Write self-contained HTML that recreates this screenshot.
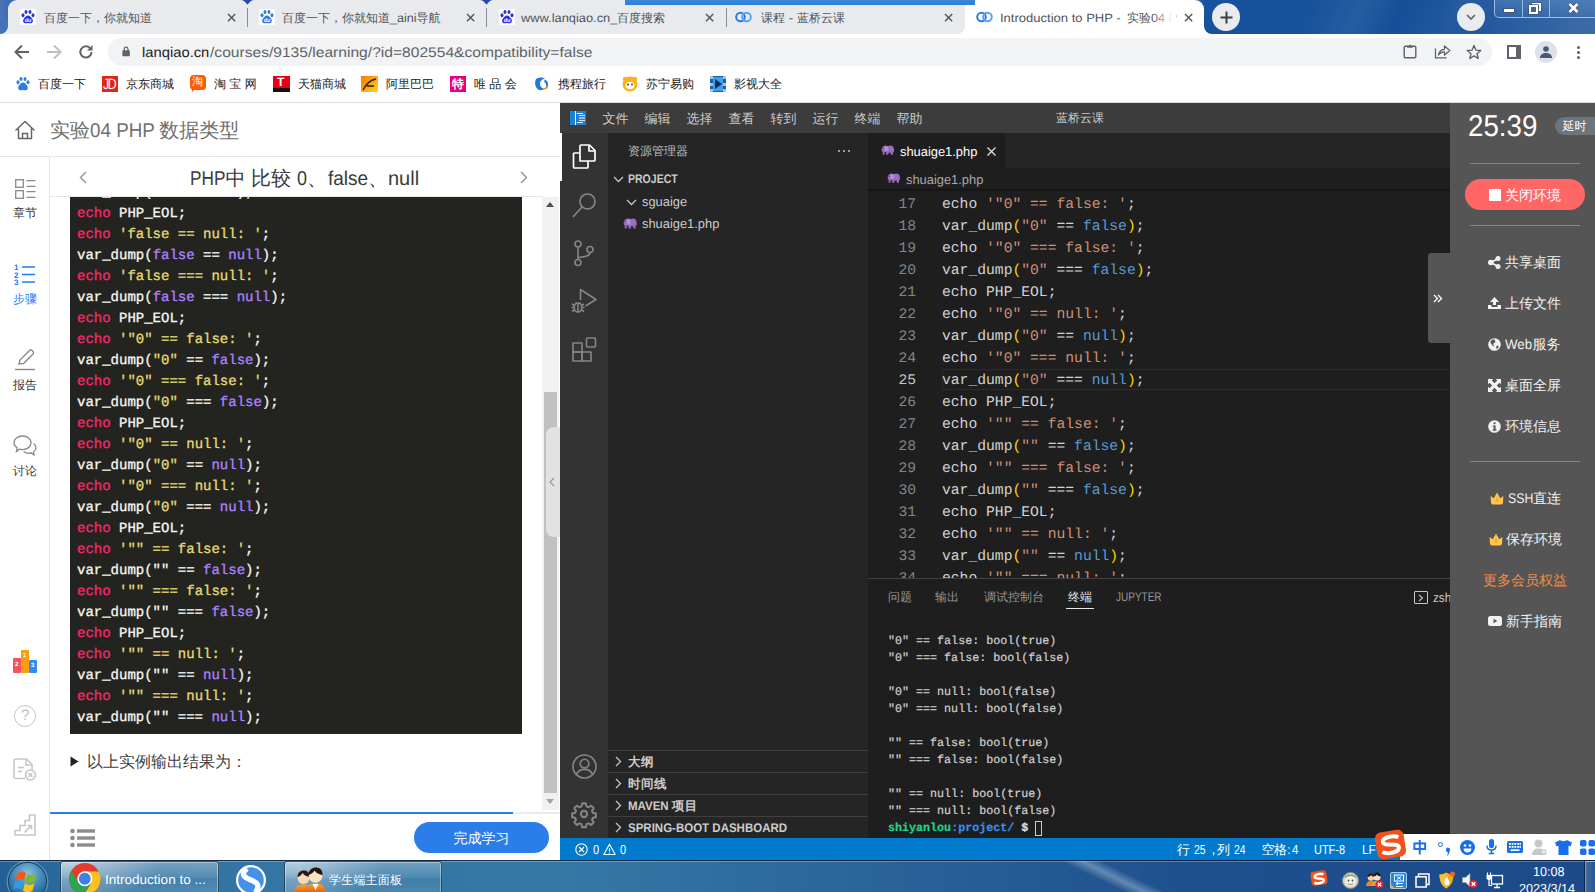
<!DOCTYPE html><html><head><meta charset="utf-8"><title>Introduction to PHP</title><style>
*{box-sizing:border-box;margin:0;padding:0}
html,body{width:1595px;height:892px;overflow:hidden;background:#fff}
body{position:relative;text-rendering:geometricPrecision;font-family:"Liberation Sans",sans-serif;font-size:12px;color:#333}
.a{position:absolute;white-space:nowrap}
.t{position:absolute;white-space:nowrap;line-height:1}
.mono{font-family:"Liberation Mono",monospace}
svg{position:absolute;overflow:visible}
/* left code */
.lc{position:absolute;left:77px;white-space:pre;font-family:"Liberation Mono",monospace;font-size:14px;line-height:21px;height:21px;color:#f8f8f2;-webkit-text-stroke:.3px}
.k{color:#f92672}.s{color:#e6db74}.c{color:#ae81ff}
/* vscode code */
.vc{position:absolute;left:942px;white-space:pre;font-family:"Liberation Mono",monospace;font-size:14.68px;line-height:22px;height:22px;color:#d4d4d4}
.ln{position:absolute;left:880px;width:36px;text-align:right;font-family:"Liberation Mono",monospace;font-size:14.68px;line-height:22px;height:22px;color:#858585}
.vs{color:#ce9178}.vb{color:#569cd6}.vp{color:#ffd700}
.tm{position:absolute;left:888px;white-space:pre;font-family:"Liberation Mono",monospace;font-size:11.7px;line-height:17px;height:17px;color:#d2d2d2;-webkit-text-stroke:.2px}
</style></head><body>
<div class="a" id="tabstrip" style="left:0;top:0;width:1595px;height:34px;background:linear-gradient(90deg,#4a76b8 0px,#3f6db3 8px,#2a62ac 1200px,#17529c 1204px,#164f98 1440px,#2a5fa2 1520px,#3d6ba8 1595px)"></div>
<div class="a" style="left:8px;top:0;width:966px;height:34px;background:#e8eaed;border-radius:9px 0 0 0"></div>
<div class="a" style="left:0px;top:26px;width:8px;height:8px;background:#e8eaed"></div>
<div class="a" style="left:-8px;top:18px;width:16px;height:16px;background:#4572b6;border-radius:0 0 8px 0"></div>
<div class="a" style="left:965px;top:0;width:239px;height:34px;background:#fff;border-radius:9px 9px 0 0"></div>
<div class="a" style="left:957px;top:26px;width:8px;height:8px;background:#fff"></div>
<div class="a" style="left:949px;top:18px;width:16px;height:16px;background:#e8eaed;border-radius:0 0 8px 0"></div>
<div class="a" style="left:1204px;top:26px;width:8px;height:8px;background:#fff"></div>
<div class="a" style="left:1204px;top:18px;width:16px;height:16px;background:#17529c;border-radius:0 0 0 8px"></div>
<div class="a" style="left:0;top:34px;width:1595px;height:69px;background:#fff"></div>
<div class="a" style="left:625px;top:0;width:350px;height:4.600px;background:linear-gradient(180deg,#3a86dc,#2f7fd6)"></div><div class="a" style="left:1240px;top:0;width:260px;height:34px;background:linear-gradient(115deg,rgba(255,255,255,0) 25%,rgba(255,255,255,.07) 45%,rgba(255,255,255,0) 60%,rgba(255,255,255,.05) 80%,rgba(255,255,255,0) 95%)"></div><div class="a" style="left:247px;top:8px;width:1px;height:19px;background:#8a8d92"></div><div class="a" style="left:486px;top:8px;width:1px;height:19px;background:#8a8d92"></div><div class="a" style="left:725.5px;top:8px;width:1px;height:19px;background:#8a8d92"></div><svg style="left:241px;top:0" width="13" height="5"><path d="M0 0C4 0 5.500 4.500 6.500 4.500S9 0 13 0z" fill="#1e4fa0"/></svg><svg style="left:480px;top:0" width="13" height="5"><path d="M0 0C4 0 5.500 4.500 6.500 4.500S9 0 13 0z" fill="#1e4fa0"/></svg><div class="t" style="left:44.00px;top:11.5px;font-size:12px;color:#50545a;">百度一下，你就知道</div><div class="t" style="left:282.00px;top:11.5px;font-size:12px;color:#50545a;">百度一下，你就知道</div><div class="t" style="left:390.00px;top:11.5px;font-size:12px;color:#50545a;white-space:pre;transform:scaleX(1.0500);transform-origin:0 50%;">_aini</div><div class="t" style="left:416.50px;top:11.5px;font-size:12px;color:#50545a;">导航</div><div class="t" style="left:521.00px;top:11.5px;font-size:12px;color:#50545a;white-space:pre;transform:scaleX(1.0700);transform-origin:0 50%;">www.lanqiao.cn_</div><div class="t" style="left:617.00px;top:11.5px;font-size:12px;color:#50545a;">百度搜索</div><div class="t" style="left:761.00px;top:11.5px;font-size:12px;color:#50545a;">课程</div><div class="t" style="left:785.00px;top:11.5px;font-size:12px;color:#50545a;white-space:pre;transform:scaleX(1.1000);transform-origin:0 50%;"> - </div><div class="t" style="left:797.00px;top:11.5px;font-size:12px;color:#50545a;">蓝桥云课</div><div class="t" style="left:1000.00px;top:11.5px;font-size:12px;color:#50545a;white-space:pre;transform:scaleX(1.0850);transform-origin:0 50%;">Introduction to PHP - </div><div class="t" style="left:1127.00px;top:11.5px;font-size:12px;color:#50545a;">实验</div><div class="t" style="left:1151.00px;top:11.5px;font-size:12px;color:#50545a;white-space:pre;transform:scaleX(1.0500);transform-origin:0 50%;">04 P</div><div class="a" style="left:1152px;top:6px;width:24px;height:22px;background:linear-gradient(90deg,rgba(255,255,255,0),#fff 85%)"></div><svg style="left:228.4px;top:13.9px" width="7.2" height="7.2"><path d="M0 0L7.2 7.2M7.2 0L0 7.2" stroke="#55595e" stroke-width="1.5" fill="none"/></svg><svg style="left:466.9px;top:13.9px" width="7.2" height="7.2"><path d="M0 0L7.2 7.2M7.2 0L0 7.2" stroke="#55595e" stroke-width="1.5" fill="none"/></svg><svg style="left:705.9px;top:13.9px" width="7.2" height="7.2"><path d="M0 0L7.2 7.2M7.2 0L0 7.2" stroke="#55595e" stroke-width="1.5" fill="none"/></svg><svg style="left:945.4px;top:13.9px" width="7.2" height="7.2"><path d="M0 0L7.2 7.2M7.2 0L0 7.2" stroke="#55595e" stroke-width="1.5" fill="none"/></svg><svg style="left:1184.9px;top:13.9px" width="7.2" height="7.2"><path d="M0 0L7.2 7.2M7.2 0L0 7.2" stroke="#55595e" stroke-width="1.5" fill="none"/></svg><svg style="left:20px;top:9px" width="16" height="16" viewBox="0 0 16 16"><rect width="16" height="16" rx="1.500" fill="#fff"/><g fill="#2932e1"><ellipse cx="3" cy="6.2" rx="1.5" ry="2"/><ellipse cx="6" cy="3" rx="1.5" ry="2.1"/><ellipse cx="10" cy="3" rx="1.5" ry="2.1"/><ellipse cx="13" cy="6.2" rx="1.5" ry="2"/><path d="M8 6.5c2 0 3.2 2 4.3 3.4 1.2 1.5.6 4-1.3 4.3-1.2.2-2-.3-3-.3s-1.8.5-3 .3c-1.9-.3-2.5-2.800-1.300-4.300C4.800 8.500 6 6.500 8 6.500z"/></g><text x="8" y="13" font-family="Liberation Sans" font-size="5.500" font-weight="bold" fill="#fff" text-anchor="middle">du</text></svg><svg style="left:259px;top:9px" width="16" height="16" viewBox="0 0 16 16"><rect width="16" height="16" rx="1.500" fill="#fff"/><g fill="#2f7de1"><ellipse cx="3" cy="6.2" rx="1.5" ry="2"/><ellipse cx="6" cy="3" rx="1.5" ry="2.1"/><ellipse cx="10" cy="3" rx="1.5" ry="2.1"/><ellipse cx="13" cy="6.2" rx="1.5" ry="2"/><path d="M8 6.5c2 0 3.2 2 4.3 3.4 1.2 1.5.6 4-1.3 4.3-1.2.2-2-.3-3-.3s-1.8.5-3 .3c-1.9-.3-2.5-2.800-1.300-4.300C4.800 8.500 6 6.500 8 6.500z"/></g><text x="8" y="13" font-family="Liberation Sans" font-size="5.500" font-weight="bold" fill="#fff" text-anchor="middle">du</text></svg><svg style="left:499px;top:9px" width="16" height="16" viewBox="0 0 16 16"><rect width="16" height="16" rx="1.500" fill="#fff"/><g fill="#2932e1"><ellipse cx="3" cy="6.2" rx="1.5" ry="2"/><ellipse cx="6" cy="3" rx="1.5" ry="2.1"/><ellipse cx="10" cy="3" rx="1.5" ry="2.1"/><ellipse cx="13" cy="6.2" rx="1.5" ry="2"/><path d="M8 6.5c2 0 3.2 2 4.3 3.4 1.2 1.5.6 4-1.3 4.3-1.2.2-2-.3-3-.3s-1.8.5-3 .3c-1.9-.3-2.5-2.800-1.300-4.300C4.800 8.500 6 6.500 8 6.500z"/></g><text x="8" y="13" font-family="Liberation Sans" font-size="5.500" font-weight="bold" fill="#fff" text-anchor="middle">du</text></svg><svg style="left:735px;top:11px" width="17" height="12" viewBox="0 0 17 12"><circle cx="5.5" cy="6" r="4.3" fill="none" stroke="#2a7be4" stroke-width="2"/><circle cx="11.500" cy="6" r="4.3" fill="none" stroke="#5aa0f0" stroke-width="2"/></svg><svg style="left:976px;top:11px" width="17" height="12" viewBox="0 0 17 12"><circle cx="5.5" cy="6" r="4.3" fill="none" stroke="#2a7be4" stroke-width="2"/><circle cx="11.500" cy="6" r="4.3" fill="none" stroke="#5aa0f0" stroke-width="2"/></svg><div class="a" style="left:1212px;top:3px;width:28px;height:28px;border-radius:50%;background:#e9ebee"></div><svg style="left:1220px;top:11px" width="13" height="13"><path d="M6.5 0.5V12.5M0.5 6.5H12.5" stroke="#3c4043" stroke-width="2" fill="none"/></svg><div class="a" style="left:1457px;top:3px;width:28px;height:28px;border-radius:50%;background:#e9ebee"></div><svg style="left:1466px;top:14px" width="10" height="7"><path d="M1 1L5 5L9 1" stroke="#5f6368" stroke-width="1.700" fill="none"/></svg><div class="a" style="left:1494px;top:-2px;width:104px;height:20px;border:1px solid rgba(190,215,245,.75);border-radius:0 0 0 5px;background:linear-gradient(180deg,rgba(120,165,215,.35),rgba(80,125,185,.25))"></div>
<div class="a" style="left:1522px;top:0;width:1px;height:17px;background:rgba(190,215,245,.7)"></div>
<div class="a" style="left:1549px;top:0;width:1px;height:17px;background:rgba(190,215,245,.7)"></div>
<div class="a" style="left:1503px;top:8px;width:12px;height:5px;background:#fff;border:1px solid #46566e"></div>
<div class="a" style="left:1532px;top:2.500px;width:9px;height:8px;border:2px solid #fff;box-shadow:0 0 0 .7px #46566e"></div>
<div class="a" style="left:1529px;top:5px;width:9px;height:8.500px;border:2.500px solid #fff;background:#3a67a3;box-shadow:0 0 0 .7px #46566e"></div>
<svg style="left:1568px;top:3px" width="11" height="10"><path d="M1.500 1L9.500 9M9.500 1L1.500 9" stroke="#46566e" stroke-width="4" fill="none"/><path d="M1.500 1L9.500 9M9.500 1L1.500 9" stroke="#fff" stroke-width="2.600" fill="none"/></svg>

<svg style="left:14px;top:44px" width="16" height="16"><path d="M15 8H2M8 1.500L1.500 8L8 14.500" stroke="#5f6368" stroke-width="2" fill="none"/></svg>
<svg style="left:46px;top:44px" width="16" height="16"><path d="M1 8H14M8 1.500L14.500 8L8 14.500" stroke="#bdc1c6" stroke-width="2" fill="none"/></svg>
<svg style="left:78px;top:44px" width="16" height="16" viewBox="0 0 16 16"><path d="M13.500 8A5.600 5.600 0 1 1 11.800 3.900" stroke="#5f6368" stroke-width="2" fill="none"/><path d="M14.500 1V6.500H9z" fill="#5f6368"/></svg>
<div class="a" style="left:108px;top:38px;width:1384px;height:28px;border-radius:14px;background:#f1f3f4"></div>
<svg style="left:122px;top:46px" width="8.200" height="10.800" viewBox="0 0 11 14"><rect x="0.500" y="5.500" width="10" height="8" rx="1" fill="#5f6368"/><path d="M3 6V3.800a2.500 2.500 0 0 1 5 0V6" stroke="#5f6368" stroke-width="1.600" fill="none"/></svg>

<div class="t" style="left:142.00px;top:45px;font-size:14px;color:#202124;white-space:pre;transform:scaleX(1.0550);transform-origin:0 50%;">lanqiao.cn</div><div class="t" style="left:209.50px;top:45px;font-size:14px;color:#5f6368;white-space:pre;transform:scaleX(1.1140);transform-origin:0 50%;">/courses/9135/learning/?id=802554&amp;compatibility=false</div>
<svg style="left:1403px;top:44px" width="14" height="15" viewBox="0 0 14 15"><rect x="1.200" y="2.200" width="11.600" height="11.600" rx="1.200" fill="none" stroke="#5f6368" stroke-width="1.400"/><path d="M4.200 3.800V1.800H5.800L7 0.600L8.200 1.800H9.800V3.800z" fill="#5f6368"/></svg>
<svg style="left:1434px;top:44px" width="17" height="15" viewBox="0 0 17 15"><path d="M1.500 4.500V13.800H12.500" stroke="#5f6368" stroke-width="1.300" fill="none"/><path d="M4.500 11C5 7.500 7.500 5.500 10.500 5.300V2L15.800 6.500L10.500 11V7.800C8 7.800 6 8.800 4.500 11z" fill="none" stroke="#5f6368" stroke-width="1.300" stroke-linejoin="round"/></svg>
<svg style="left:1466px;top:43.500px" width="16" height="16" viewBox="0 0 16 16"><path d="M8 1.500L9.900 6.100L14.800 6.500L11 9.700L12.200 14.500L8 11.900L3.800 14.500L5 9.700L1.200 6.500L6.100 6.100z" fill="none" stroke="#5f6368" stroke-width="1.400" stroke-linejoin="round"/></svg>
<div class="a" style="left:1507px;top:45px;width:14px;height:14px;border:2px solid #5f6368"></div><div class="a" style="left:1516px;top:45px;width:5px;height:14px;background:#5f6368"></div>
<div class="a" style="left:1535px;top:41px;width:22px;height:22px;border-radius:50%;background:#dfe1e8"></div>
<svg style="left:1540px;top:46px" width="12" height="12" viewBox="0 0 12 12"><circle cx="6" cy="3" r="2.800" fill="#4a5878"/><path d="M0 12c0-3.500 2.500-5 6-5s6 1.500 6 5z" fill="#4a5878"/></svg>
<div class="a" style="left:1576.500px;top:46px;width:3px;height:3px;border-radius:50%;background:#5f6368;box-shadow:0 5px 0 #5f6368,0 10px 0 #5f6368"></div>
<div class="t" style="left:38px;top:78px;font-size:12px;color:#202124">百度一下</div><div class="t" style="left:126px;top:78px;font-size:12px;color:#202124">京东商城</div><div class="t" style="left:214px;top:78px;font-size:12px;color:#202124">淘 宝 网</div><div class="t" style="left:298px;top:78px;font-size:12px;color:#202124">天猫商城</div><div class="t" style="left:386px;top:78px;font-size:12px;color:#202124">阿里巴巴</div><div class="t" style="left:474px;top:78px;font-size:12px;color:#202124">唯 品 会</div><div class="t" style="left:558px;top:78px;font-size:12px;color:#202124">携程旅行</div><div class="t" style="left:646px;top:78px;font-size:12px;color:#202124">苏宁易购</div><div class="t" style="left:734px;top:78px;font-size:12px;color:#202124">影视大全</div>
<svg style="left:15px;top:76px" width="16" height="16" viewBox="0 0 16 16"><g fill="#2f7de1"><ellipse cx="3" cy="6.200" rx="1.500" ry="2"/><ellipse cx="6" cy="3" rx="1.500" ry="2.100"/><ellipse cx="10" cy="3" rx="1.500" ry="2.100"/><ellipse cx="13" cy="6.200" rx="1.500" ry="2"/><path d="M8 6.500c2 0 3.200 2 4.300 3.400 1.200 1.500.600 4-1.300 4.300-1.200.200-2-.300-3-.300s-1.800.500-3 .300c-1.900-.300-2.500-2.800-1.300-4.300C4.800 8.500 6 6.500 8 6.500z"/></g></svg>
<div class="a" style="left:102px;top:76px;width:16px;height:16px;background:#e1251b"></div><div class="t" style="left:102.500px;top:76.500px;font-size:15px;color:#fff;letter-spacing:-1.800px;transform:scaleX(.82);transform-origin:0 50%">JD</div>
<div class="a" style="left:190px;top:75px;width:16px;height:15px;background:#ff5a00;border-radius:4px"></div><div class="a" style="left:192px;top:88px;width:0;height:0;border-left:4px solid #ff5a00;border-bottom:4px solid transparent"></div><div class="t" style="left:192px;top:77px;font-size:11px;color:#fff">淘</div>
<div class="a" style="left:273px;top:76px;width:17px;height:16px;background:#e60012;border-bottom:4px solid #111"></div><div class="t" style="left:277px;top:76px;font-size:12px;font-weight:bold;color:#fff">T</div>
<div class="a" style="left:361px;top:76px;width:17px;height:16px;background:linear-gradient(135deg,#ff7a00,#ffd21e)"></div><svg style="left:361px;top:76px" width="17" height="16"><path d="M2 14C6 6 10 4 15 3M6 10H13" stroke="#222" stroke-width="1.500" fill="none"/></svg>
<div class="a" style="left:450px;top:76px;width:16px;height:16px;background:#e4007f"></div><div class="t" style="left:452px;top:78px;font-size:12px;font-weight:bold;color:#fff">特</div>
<svg style="left:534px;top:76px" width="16" height="16" viewBox="0 0 16 16"><path d="M2 3C5 1 9 1 11 3 8 3 6 5 6 8c0 2.500 2 4.500 4.500 4.500C8.500 15 4 15 2 11 0.500 8 1 5 2 3z" fill="#2577e3"/><path d="M11 3.500c2 1 3.500 3 3 6-.300 2-1.500 3.500-3.500 4 1.500-1.500 2-3 1.500-5-.300-1.300-1-2.200-2-2.700z" fill="#2577e3"/><path d="M9 12.500c2 .500 4-.500 5-2" stroke="#ff9a1f" stroke-width="1.500" fill="none"/></svg>
<svg style="left:622px;top:76px" width="16" height="16" viewBox="0 0 16 16"><circle cx="8" cy="8" r="7.500" fill="#fbb216"/><circle cx="3" cy="3" r="2.200" fill="#fbb216"/><circle cx="13" cy="3" r="2.200" fill="#fbb216"/><ellipse cx="8" cy="9.500" rx="4.500" ry="3.800" fill="#fff"/><circle cx="6" cy="8.500" r=".9" fill="#333"/><circle cx="10" cy="8.500" r=".9" fill="#333"/></svg>
<div class="a" style="left:710px;top:76px;width:16px;height:16px;background:#1c5fa8;border-left:3px dotted #9cc4ea;border-right:3px dotted #9cc4ea"></div><div class="a" style="left:713px;top:77px;width:10px;height:14px;background:#3ea0e6"></div><div class="a" style="left:715px;top:79px;width:0;height:0;border-left:7px solid #0d2d5c;border-top:5px solid transparent;border-bottom:5px solid transparent"></div>
<div class="a" style="left:0;top:102px;width:1595px;height:1px;background:#dcdcdc"></div>

<div class="a" style="left:0;top:103px;width:560px;height:757px;background:#fff"></div>
<div class="a" style="left:0;top:156px;width:560px;height:1px;background:#e8e8e8"></div>
<div class="a" style="left:49px;top:157px;width:1px;height:703px;background:#e4e4e4"></div>
<div class="a" style="left:50px;top:196px;width:493px;height:1px;background:#e8e8e8"></div>
<svg style="left:14px;top:119px" width="22" height="22" viewBox="0 0 22 22"><path d="M1.500 11.500L11 2.500L20.500 11.500M4.500 9.500V19.500H17.500V9.500" fill="none" stroke="#666" stroke-width="1.500" stroke-linejoin="round"/><path d="M8.500 19V14.500H13.500V19" fill="none" stroke="#666" stroke-width="1.500"/></svg>
<svg style="left:79px;top:171px" width="8" height="13"><path d="M7 1L1.500 6.500L7 12" stroke="#999" stroke-width="1.500" fill="none"/></svg>
<svg style="left:520px;top:171px" width="8" height="13"><path d="M1 1L6.500 6.500L1 12" stroke="#999" stroke-width="1.500" fill="none"/></svg>
<div class="t" style="left:50.00px;top:121px;font-size:20px;color:#707070;">实验</div><div class="t" style="left:89.70px;top:121px;font-size:20px;color:#707070;white-space:pre;transform:scaleX(0.9400);transform-origin:0 50%;">04 PHP </div><div class="t" style="left:159.30px;top:121px;font-size:20px;color:#707070;">数据类型</div><div class="t" style="left:190.00px;top:169px;font-size:20px;color:#3a3a3a;white-space:pre;transform:scaleX(0.8600);transform-origin:0 50%;">PHP</div><div class="t" style="left:225.50px;top:169px;font-size:20px;color:#3a3a3a;">中</div><div class="t" style="left:251.00px;top:169px;font-size:20px;color:#3a3a3a;">比较</div><div class="t" style="left:296.50px;top:169px;font-size:20px;color:#3a3a3a;white-space:pre;transform:scaleX(0.9000);transform-origin:0 50%;">0</div><div class="t" style="left:307.00px;top:169px;font-size:20px;color:#3a3a3a;">、</div><div class="t" style="left:328.00px;top:169px;font-size:20px;color:#3a3a3a;white-space:pre;transform:scaleX(0.9500);transform-origin:0 50%;">false</div><div class="t" style="left:368.00px;top:169px;font-size:20px;color:#3a3a3a;">、</div><div class="t" style="left:388.00px;top:169px;font-size:20px;color:#3a3a3a;white-space:pre;">null</div>
<svg style="left:15px;top:179px" width="21" height="21" viewBox="0 0 21 21"><g fill="none" stroke="#8a8a8a" stroke-width="1.300"><rect x="0.700" y="0.700" width="7.600" height="7.600"/><rect x="0.700" y="11.700" width="7.600" height="7.600"/><path d="M11.500 1.700H20.500M11.500 7.300H20.500M11.500 12.700H20.500M11.500 18.300H20.500"/></g></svg>
<div class="t" style="left:13px;top:207px;font-size:12px;color:#333">章节</div>
<svg style="left:14px;top:263px" width="22" height="23" viewBox="0 0 22 23"><g fill="none" stroke="#1a7dff" stroke-width="1.700"><path d="M8 4H21M8 11.500H21M8 19H21"/></g><g fill="#1677ff" font-family="Liberation Sans" font-size="8" font-weight="bold"><text x="0" y="7">1</text><text x="0" y="14.500">2</text><text x="0" y="22">3</text></g></svg>
<div class="t" style="left:13px;top:293px;font-size:12px;color:#1a7dff">步骤</div>
<svg style="left:15px;top:349px" width="21" height="22" viewBox="0 0 21 22"><g fill="none" stroke="#8a8a8a" stroke-width="1.400"><path d="M4 15L5 11L14.500 1.500a1.800 1.800 0 0 1 2.600 0l.9.900a1.800 1.800 0 0 1 0 2.600L8.500 14.500z"/><path d="M0 20.500H20"/></g></svg>
<div class="t" style="left:13px;top:379px;font-size:12px;color:#333">报告</div>
<svg style="left:13px;top:435px" width="24" height="22" viewBox="0 0 24 22"><g fill="none" stroke="#8a8a8a" stroke-width="1.300"><path d="M9.500 1C14.500 1 18 4 18 7.800s-3.500 6.800-8.500 6.800c-1 0-2-.1-3-.4L3.500 16.500l.7-3.500C2.200 11.800 1 10 1 7.800 1 4 4.500 1 9.500 1z"/><path d="M20.500 8.500c1.500 1 2.500 2.500 2.500 4.200 0 1.800-1 3.300-2.600 4.300l.6 3-2.800-2c-2.700.7-5.500.2-7.500-1.500"/></g></svg>
<div class="t" style="left:13px;top:465px;font-size:12px;color:#333">讨论</div>
<div class="a" style="left:13px;top:658px;width:8px;height:15px;background:#f4525c;border-radius:1px"></div>
<div class="a" style="left:21px;top:650px;width:8px;height:23px;background:#fb9d12;border-radius:1px"></div>
<div class="a" style="left:29px;top:660px;width:8px;height:13px;background:#2f8df5;border-radius:1px"></div>
<div class="t" style="left:15px;top:662px;font-size:6px;font-weight:bold;color:#fff">2</div>
<div class="t" style="left:23px;top:653px;font-size:6px;font-weight:bold;color:#fff">1</div>
<div class="t" style="left:31px;top:663px;font-size:6px;font-weight:bold;color:#fff">3</div>
<div class="a" style="left:14px;top:705px;width:22px;height:22px;border-radius:50%;border:1.700px solid #c6c6c6"></div>
<div class="t" style="left:21px;top:708px;font-size:15px;color:#c0c0c0">?</div>
<svg style="left:13px;top:758px" width="24" height="23" viewBox="0 0 24 23"><g fill="none" stroke="#c6c6c6" stroke-width="1.600"><path d="M12 20.500H3a2 2 0 0 1-2-2V3a2 2 0 0 1 2-2h10.500L19 6.500V12"/><path d="M13 1.500V7H18.500M5 9.500H11M5 13.500H9"/><circle cx="17.500" cy="17" r="5"/><path d="M15.500 15L19.500 19M19.500 15L15.500 19"/></g></svg>
<svg style="left:14px;top:813.500px" width="22" height="22" viewBox="0 0 22 22"><g fill="none" stroke="#c6c6c6" stroke-width="1.600"><path d="M1 21V16.500H6V11.500H11V6.500H15.500V1H21V21z"/><path d="M10.500 18.500L17.500 11.500M13.500 11.500H17.500V15.500"/></g></svg>
<div class="a" style="left:70px;top:197px;width:452px;height:537px;background:#23241f;overflow:hidden"></div><div class="a" style="left:70px;top:197px;width:452px;height:537px;overflow:hidden"><div class="lc" style="left:7px;top:-14.5px">var_dump(0 === <span class="c">null</span>);</div><div class="lc" style="left:7px;top:6.5px"><span class="k">echo</span> PHP_EOL;</div><div class="lc" style="left:7px;top:27.5px"><span class="k">echo</span> <span class="s">'false == null: '</span>;</div><div class="lc" style="left:7px;top:48.5px">var_dump(<span class="c">false</span> == <span class="c">null</span>);</div><div class="lc" style="left:7px;top:69.5px"><span class="k">echo</span> <span class="s">'false === null: '</span>;</div><div class="lc" style="left:7px;top:90.5px">var_dump(<span class="c">false</span> === <span class="c">null</span>);</div><div class="lc" style="left:7px;top:111.5px"><span class="k">echo</span> PHP_EOL;</div><div class="lc" style="left:7px;top:132.5px"><span class="k">echo</span> <span class="s">'"0" == false: '</span>;</div><div class="lc" style="left:7px;top:153.5px">var_dump(<span class="s">"0"</span> == <span class="c">false</span>);</div><div class="lc" style="left:7px;top:174.5px"><span class="k">echo</span> <span class="s">'"0" === false: '</span>;</div><div class="lc" style="left:7px;top:195.5px">var_dump(<span class="s">"0"</span> === <span class="c">false</span>);</div><div class="lc" style="left:7px;top:216.5px"><span class="k">echo</span> PHP_EOL;</div><div class="lc" style="left:7px;top:237.5px"><span class="k">echo</span> <span class="s">'"0" == null: '</span>;</div><div class="lc" style="left:7px;top:258.5px">var_dump(<span class="s">"0"</span> == <span class="c">null</span>);</div><div class="lc" style="left:7px;top:279.5px"><span class="k">echo</span> <span class="s">'"0" === null: '</span>;</div><div class="lc" style="left:7px;top:300.5px">var_dump(<span class="s">"0"</span> === <span class="c">null</span>);</div><div class="lc" style="left:7px;top:321.5px"><span class="k">echo</span> PHP_EOL;</div><div class="lc" style="left:7px;top:342.5px"><span class="k">echo</span> <span class="s">'"" == false: '</span>;</div><div class="lc" style="left:7px;top:363.5px">var_dump("" == <span class="c">false</span>);</div><div class="lc" style="left:7px;top:384.5px"><span class="k">echo</span> <span class="s">'"" === false: '</span>;</div><div class="lc" style="left:7px;top:405.5px">var_dump("" === <span class="c">false</span>);</div><div class="lc" style="left:7px;top:426.5px"><span class="k">echo</span> PHP_EOL;</div><div class="lc" style="left:7px;top:447.5px"><span class="k">echo</span> <span class="s">'"" == null: '</span>;</div><div class="lc" style="left:7px;top:468.5px">var_dump("" == <span class="c">null</span>);</div><div class="lc" style="left:7px;top:489.5px"><span class="k">echo</span> <span class="s">'"" === null: '</span>;</div><div class="lc" style="left:7px;top:510.5px">var_dump("" === <span class="c">null</span>);</div></div>
<svg style="left:70px;top:756px" width="9" height="11"><path d="M0.500 0.500L8.500 5.500L0.500 10.500z" fill="#222"/></svg>
<div class="t" style="left:87px;top:755px;font-size:16px;color:#3d3d3d">以上实例输出结果为：</div>
<div class="a" style="left:542px;top:197px;width:17px;height:613px;background:#f1f1f1"></div>
<div class="a" style="left:544px;top:392px;width:13px;height:401px;background:#c1c1c1"></div>
<div class="a" style="left:546px;top:202px;width:0;height:0;border-left:4.500px solid transparent;border-right:4.500px solid transparent;border-bottom:5px solid #505050"></div>
<div class="a" style="left:546px;top:799px;width:0;height:0;border-left:4.500px solid transparent;border-right:4.500px solid transparent;border-top:5px solid #a3a3a3"></div>
<div class="a" style="left:546px;top:427px;width:14px;height:110px;background:#e2e2e2;border-radius:8px 0 0 8px"></div>
<svg style="left:549px;top:477px" width="6" height="10"><path d="M5 1L1 5L5 9" stroke="#999" stroke-width="1.200" fill="none"/></svg>
<div class="a" style="left:50px;top:811.700px;width:510px;height:2.100px;background:#e9ecef"></div><div class="a" style="left:50px;top:811.700px;width:463px;height:2.100px;background:#2b7de9"></div>
<svg style="left:70px;top:828px" width="25" height="20" viewBox="0 0 25 20"><g fill="#8c8c8c"><circle cx="2.500" cy="3" r="2.300"/><circle cx="2.500" cy="10" r="2.300"/><circle cx="2.500" cy="17" r="2.300"/><rect x="7" y="1.300" width="18" height="3.400"/><rect x="7" y="8.300" width="18" height="3.400"/><rect x="7" y="15.300" width="18" height="3.400"/></g></svg>
<div class="a" style="left:414px;top:822px;width:135px;height:31px;border-radius:16px;background:#2b7de9"></div>
<div class="t" style="left:414px;top:831px;width:135px;text-align:center;font-size:14px;color:#fff">完成学习</div>

<div class="a" style="left:560px;top:103px;width:890px;height:30px;background:#3c3c3c"></div>
<div class="a" style="left:560px;top:133px;width:48px;height:705px;background:#333333"></div>
<div class="a" style="left:608px;top:133px;width:260px;height:705px;background:#252526"></div>
<div class="a" style="left:868px;top:133px;width:582px;height:705px;background:#1e1e1e"></div>
<div class="a" style="left:868px;top:133px;width:582px;height:35px;background:#252526"></div>
<div class="a" style="left:868px;top:133px;width:137px;height:35px;background:#1e1e1e"></div>
<div class="a" style="left:868px;top:189px;width:582px;height:3px;background:linear-gradient(180deg,#111,rgba(20,20,20,0))"></div>
<div class="a" style="left:560px;top:133px;width:2px;height:48px;background:#fff"></div>
<div class="a" style="left:560px;top:838px;width:890px;height:22px;background:#007acc"></div>
<div class="a" style="left:570px;top:111px;width:16px;height:14px;background:#1f80d2"></div>
<div class="a" style="left:574.500px;top:111px;width:1.200px;height:14px;background:#eef5fc"></div>
<div class="a" style="left:577px;top:113px;width:6px;height:1px;background:#dbeaf8"></div>
<div class="a" style="left:579px;top:115.200px;width:6px;height:1px;background:#cfe3f6"></div>
<div class="a" style="left:579px;top:117px;width:6px;height:2px;background:#8fbfe8"></div>
<div class="a" style="left:579px;top:120px;width:6px;height:1px;background:#cfe3f6"></div>
<div class="a" style="left:577px;top:122.200px;width:6px;height:1px;background:#dbeaf8"></div><div class="t" style="left:602.50px;top:111.5px;font-size:13px;color:#cccccc;">文件</div><div class="t" style="left:644.50px;top:111.5px;font-size:13px;color:#cccccc;">编辑</div><div class="t" style="left:686.50px;top:111.5px;font-size:13px;color:#cccccc;">选择</div><div class="t" style="left:728.50px;top:111.5px;font-size:13px;color:#cccccc;">查看</div><div class="t" style="left:770.50px;top:111.5px;font-size:13px;color:#cccccc;">转到</div><div class="t" style="left:812.50px;top:111.5px;font-size:13px;color:#cccccc;">运行</div><div class="t" style="left:854.50px;top:111.5px;font-size:13px;color:#cccccc;">终端</div><div class="t" style="left:896.50px;top:111.5px;font-size:13px;color:#cccccc;">帮助</div><div class="t" style="left:1056.00px;top:112px;font-size:12px;color:#cccccc;">蓝桥云课</div>
<svg style="left:572px;top:144px" width="25" height="26" viewBox="0 0 25 26"><g fill="none" stroke="#fff" stroke-width="1.700" stroke-linejoin="round"><path d="M8 17V2a1 1 0 0 1 1-1H17.500L23 6.500V16a1 1 0 0 1-1 1z"/><path d="M17 1.300V7H22.700"/><path d="M8 9H2.500a1 1 0 0 0-1 1V23a1 1 0 0 0 1 1H15a1 1 0 0 0 1-1V17"/></g></svg>
<svg style="left:572px;top:192px" width="25" height="26" viewBox="0 0 25 26"><g fill="none" stroke="#858585" stroke-width="1.700"><circle cx="15.500" cy="9.500" r="7.500"/><path d="M10.200 14.800L1 25"/></g></svg>
<svg style="left:573px;top:240px" width="22" height="27" viewBox="0 0 22 27"><g fill="none" stroke="#858585" stroke-width="1.600"><circle cx="5" cy="4" r="3"/><circle cx="5" cy="22.500" r="3"/><circle cx="17" cy="9.500" r="3"/><path d="M5 7V19.500M17 12.500c0 4-6 4.500-12 5"/></g></svg>
<svg style="left:571px;top:288px" width="27" height="26" viewBox="0 0 27 26"><g fill="none" stroke="#858585" stroke-width="1.600" stroke-linejoin="round"><path d="M9.500 12V1.500L25 11.500L14.500 18"/><ellipse cx="7" cy="19.500" rx="3.800" ry="4.500"/><path d="M7 15V24M1 16l2.500 1.500M1 23.500l2.500-1.500M13 16l-2.500 1.500M13 23.500l-2.500-1.500M0.500 19.500H3.200M10.800 19.500H13.500M4.500 14.500l1 1M9.500 14.500l-1 1"/></g></svg>
<svg style="left:572px;top:337px" width="25" height="25" viewBox="0 0 25 25"><g fill="none" stroke="#858585" stroke-width="1.600" stroke-linejoin="round"><rect x="1" y="6" width="9" height="9"/><rect x="1" y="15" width="9" height="9"/><rect x="10" y="15" width="9" height="9"/><rect x="14.500" y="1" width="9" height="9" rx="1"/></g></svg>
<svg style="left:571.500px;top:753.500px" width="25" height="25" viewBox="0 0 26 26"><g fill="none" stroke="#858585" stroke-width="1.700"><circle cx="13" cy="13" r="12"/><circle cx="13" cy="10" r="4.500"/><path d="M4.500 21.500c1.500-4 5-5.500 8.500-5.500s7 1.500 8.500 5.500"/></g></svg>
<svg style="left:572px;top:802px" width="24" height="24" viewBox="0 0 26 26"><g fill="none" stroke="#858585" stroke-width="2.200" stroke-linejoin="round"><circle cx="13" cy="13" r="3.400"/><path d="M11 1.500h4l.7 3.300 2.100.9 2.900-1.800 2.800 2.800-1.800 2.900.9 2.100 3.300.7v4l-3.300.7-.9 2.100 1.800 2.900-2.800 2.800-2.900-1.800-2.100.9-.7 3.300h-4l-.7-3.300-2.100-.9-2.900 1.800-2.800-2.800 1.800-2.900-.9-2.100-3.300-.7v-4l3.300-.7.9-2.100-1.800-2.900 2.800-2.800 2.900 1.800 2.100-.9z"/></g></svg>
<div class="t" style="left:628.00px;top:144.5px;font-size:12px;color:#bbbbbb;">资源管理器</div><div class="a" style="left:838px;top:149.500px;width:2px;height:2px;border-radius:50%;background:#c5c5c5;box-shadow:5px 0 0 #c5c5c5,10px 0 0 #c5c5c5"></div><svg style="left:613px;top:176px" width="11" height="7"><path d="M1 1L5.500 5.500L10 1" stroke="#c5c5c5" stroke-width="1.300" fill="none"/></svg><svg style="left:626px;top:199px" width="11" height="7"><path d="M1 1L5.500 5.500L10 1" stroke="#c5c5c5" stroke-width="1.300" fill="none"/></svg><div class="t" style="left:628.00px;top:173px;font-size:12.5px;color:#cccccc;white-space:pre;font-weight:bold;transform:scaleX(0.8420);transform-origin:0 50%;">PROJECT</div><div class="t" style="left:641.50px;top:195px;font-size:13px;color:#cccccc;white-space:pre;transform:scaleX(0.9900);transform-origin:0 50%;">sguaige</div><svg style="left:623px;top:217.5px" width="14.0" height="11.0" viewBox="0 0 14 11"><path d="M0.700 5.800C0.400 2.800 2.500 0.400 5 0.400c1 0 1.700.3 2.300.8C8 0.700 9 0.400 10 0.400c2.300 0 3.700 1.800 3.700 4.300V7.300c0 .5-.7.500-.8.100L12.600 6v4.400h-2.300V8.200H7.800v2.200H5.500V7.800C4.800 7.800 4.200 7.600 3.700 7.200V10.400H1.800V7.500C1.100 7 0.800 6.500 0.700 5.800z" fill="#9a6cc0"/><ellipse cx="5.600" cy="3.900" rx="2.300" ry="2.600" fill="#b58fd6"/><circle cx="2.300" cy="3.600" r=".55" fill="#3a2a4a"/></svg><div class="t" style="left:641.50px;top:217px;font-size:13px;color:#cccccc;white-space:pre;transform:scaleX(0.9900);transform-origin:0 50%;">shuaige1.php</div><div class="a" style="left:608px;top:750px;width:260px;height:1px;background:#3f3f40"></div><svg style="left:615px;top:756px" width="7" height="11"><path d="M1 1L5.500 5.500L1 10" stroke="#c5c5c5" stroke-width="1.300" fill="none"/></svg><div class="t" style="left:628.00px;top:755.5px;font-size:12.5px;color:#cccccc;font-weight:bold;letter-spacing:0.50px;">大纲</div><div class="a" style="left:608px;top:772px;width:260px;height:1px;background:#3f3f40"></div><svg style="left:615px;top:778px" width="7" height="11"><path d="M1 1L5.500 5.500L1 10" stroke="#c5c5c5" stroke-width="1.300" fill="none"/></svg><div class="t" style="left:628.00px;top:777.5px;font-size:12.5px;color:#cccccc;font-weight:bold;letter-spacing:0.50px;">时间线</div><div class="a" style="left:608px;top:794px;width:260px;height:1px;background:#3f3f40"></div><svg style="left:615px;top:800px" width="7" height="11"><path d="M1 1L5.500 5.500L1 10" stroke="#c5c5c5" stroke-width="1.300" fill="none"/></svg><div class="t" style="left:628.00px;top:799.5px;font-size:12.5px;color:#cccccc;white-space:pre;font-weight:bold;transform:scaleX(0.9200);transform-origin:0 50%;">MAVEN </div><div class="t" style="left:671.87px;top:799.5px;font-size:12.5px;color:#cccccc;font-weight:bold;letter-spacing:0.50px;">项目</div><div class="a" style="left:608px;top:816px;width:260px;height:1px;background:#3f3f40"></div><svg style="left:615px;top:822px" width="7" height="11"><path d="M1 1L5.500 5.500L1 10" stroke="#c5c5c5" stroke-width="1.300" fill="none"/></svg><div class="t" style="left:628.00px;top:821.5px;font-size:12.5px;color:#cccccc;white-space:pre;font-weight:bold;transform:scaleX(0.9200);transform-origin:0 50%;">SPRING-BOOT DASHBOARD</div><svg style="left:881px;top:145px" width="13.299999999999999" height="10.45" viewBox="0 0 14 11"><path d="M0.700 5.800C0.400 2.800 2.500 0.400 5 0.400c1 0 1.700.3 2.300.8C8 0.700 9 0.400 10 0.400c2.300 0 3.700 1.800 3.700 4.300V7.300c0 .5-.7.500-.8.100L12.600 6v4.400h-2.300V8.200H7.800v2.200H5.500V7.800C4.800 7.800 4.200 7.600 3.700 7.200V10.400H1.800V7.500C1.100 7 0.800 6.500 0.700 5.800z" fill="#9a6cc0"/><ellipse cx="5.600" cy="3.900" rx="2.300" ry="2.600" fill="#b58fd6"/><circle cx="2.300" cy="3.600" r=".55" fill="#3a2a4a"/></svg><div class="t" style="left:900.00px;top:144.5px;font-size:13px;color:#ffffff;white-space:pre;transform:scaleX(0.9900);transform-origin:0 50%;">shuaige1.php</div><svg style="left:987px;top:147px" width="9" height="9"><path d="M0.500 0.500L8.500 8.500M8.500 0.500L0.500 8.500" stroke="#e0e0e0" stroke-width="1.300" fill="none"/></svg><svg style="left:887px;top:173px" width="13.299999999999999" height="10.45" viewBox="0 0 14 11"><path d="M0.700 5.800C0.400 2.800 2.500 0.400 5 0.400c1 0 1.700.3 2.300.8C8 0.700 9 0.400 10 0.400c2.300 0 3.700 1.800 3.700 4.300V7.300c0 .5-.7.500-.8.100L12.600 6v4.400h-2.300V8.200H7.800v2.200H5.500V7.800C4.800 7.800 4.200 7.600 3.700 7.200V10.400H1.800V7.500C1.100 7 0.800 6.500 0.700 5.800z" fill="#9a6cc0"/><ellipse cx="5.600" cy="3.900" rx="2.300" ry="2.600" fill="#b58fd6"/><circle cx="2.300" cy="3.600" r=".55" fill="#3a2a4a"/></svg><div class="t" style="left:906.00px;top:172.5px;font-size:13px;color:#a9a9a9;white-space:pre;transform:scaleX(0.9900);transform-origin:0 50%;">shuaige1.php</div><div class="a" style="left:868px;top:192px;width:582px;height:386px;overflow:hidden"><div class="a" style="left:74px;top:176.500px;width:520px;height:21.500px;border:1px solid #2b2b2b"></div><div class="ln" style="left:12px;top:1.6999999999999886px;color:#858585">17</div><div class="vc" style="left:74px;top:1.6999999999999886px">echo <span class="vs">'"0" == false: '</span>;</div><div class="ln" style="left:12px;top:23.69999999999999px;color:#858585">18</div><div class="vc" style="left:74px;top:23.69999999999999px">var_dump<span class="vp">(</span><span class="vs">"0"</span> == <span class="vb">false</span><span class="vp">)</span>;</div><div class="ln" style="left:12px;top:45.69999999999999px;color:#858585">19</div><div class="vc" style="left:74px;top:45.69999999999999px">echo <span class="vs">'"0" === false: '</span>;</div><div class="ln" style="left:12px;top:67.69999999999999px;color:#858585">20</div><div class="vc" style="left:74px;top:67.69999999999999px">var_dump<span class="vp">(</span><span class="vs">"0"</span> === <span class="vb">false</span><span class="vp">)</span>;</div><div class="ln" style="left:12px;top:89.69999999999999px;color:#858585">21</div><div class="vc" style="left:74px;top:89.69999999999999px">echo PHP_EOL;</div><div class="ln" style="left:12px;top:111.69999999999999px;color:#858585">22</div><div class="vc" style="left:74px;top:111.69999999999999px">echo <span class="vs">'"0" == null: '</span>;</div><div class="ln" style="left:12px;top:133.7px;color:#858585">23</div><div class="vc" style="left:74px;top:133.7px">var_dump<span class="vp">(</span><span class="vs">"0"</span> == <span class="vb">null</span><span class="vp">)</span>;</div><div class="ln" style="left:12px;top:155.7px;color:#858585">24</div><div class="vc" style="left:74px;top:155.7px">echo <span class="vs">'"0" === null: '</span>;</div><div class="ln" style="left:12px;top:177.7px;color:#c6c6c6">25</div><div class="vc" style="left:74px;top:177.7px">var_dump<span class="vp">(</span><span class="vs">"0"</span> === <span class="vb">null</span><span class="vp">)</span>;</div><div class="ln" style="left:12px;top:199.7px;color:#858585">26</div><div class="vc" style="left:74px;top:199.7px">echo PHP_EOL;</div><div class="ln" style="left:12px;top:221.7px;color:#858585">27</div><div class="vc" style="left:74px;top:221.7px">echo <span class="vs">'"" == false: '</span>;</div><div class="ln" style="left:12px;top:243.7px;color:#858585">28</div><div class="vc" style="left:74px;top:243.7px">var_dump<span class="vp">(</span><span class="vs">""</span> == <span class="vb">false</span><span class="vp">)</span>;</div><div class="ln" style="left:12px;top:265.7px;color:#858585">29</div><div class="vc" style="left:74px;top:265.7px">echo <span class="vs">'"" === false: '</span>;</div><div class="ln" style="left:12px;top:287.7px;color:#858585">30</div><div class="vc" style="left:74px;top:287.7px">var_dump<span class="vp">(</span><span class="vs">""</span> === <span class="vb">false</span><span class="vp">)</span>;</div><div class="ln" style="left:12px;top:309.70000000000005px;color:#858585">31</div><div class="vc" style="left:74px;top:309.70000000000005px">echo PHP_EOL;</div><div class="ln" style="left:12px;top:331.70000000000005px;color:#858585">32</div><div class="vc" style="left:74px;top:331.70000000000005px">echo <span class="vs">'"" == null: '</span>;</div><div class="ln" style="left:12px;top:353.70000000000005px;color:#858585">33</div><div class="vc" style="left:74px;top:353.70000000000005px">var_dump<span class="vp">(</span><span class="vs">""</span> == <span class="vb">null</span><span class="vp">)</span>;</div><div class="ln" style="left:12px;top:375.70000000000005px;color:#858585">34</div><div class="vc" style="left:74px;top:375.70000000000005px">echo <span class="vs">'"" === null: '</span>;</div></div><div class="a" style="left:1428px;top:253px;width:22px;height:90px;background:#555555;border-radius:3.500px 0 0 3.500px"></div><svg style="left:1433px;top:294px" width="9" height="9"><path d="M1 1L4.500 4.500L1 8M5 1L8.500 4.500L5 8" stroke="#fff" stroke-width="1.300" fill="none"/></svg><div class="a" style="left:868px;top:578px;width:582px;height:1px;background:#414141"></div><div class="t" style="left:888.00px;top:590.5px;font-size:12px;color:#969696;">问题</div><div class="t" style="left:935.00px;top:590.5px;font-size:12px;color:#969696;">输出</div><div class="t" style="left:984.00px;top:590.5px;font-size:12px;color:#969696;">调试控制台</div><div class="t" style="left:1068.00px;top:590.5px;font-size:12px;color:#e7e7e7;">终端</div><div class="t" style="left:1116.00px;top:590.5px;font-size:12.5px;color:#969696;white-space:pre;transform:scaleX(0.8000);transform-origin:0 50%;">JUPYTER</div><div class="a" style="left:1066px;top:608px;width:28px;height:1px;background:#e7e7e7"></div><div class="a" style="left:1413.500px;top:590.500px;width:14px;height:13.500px;border:1px solid #c5c5c5;border-radius:1px"></div><svg style="left:1418px;top:593.500px" width="6" height="8"><path d="M1 1L4.500 4L1 7" stroke="#c5c5c5" stroke-width="1.100" fill="none"/></svg><div class="a" style="left:1433px;top:590px;width:17px;height:16px;overflow:hidden"><div class="t" style="left:0;top:1px;font-size:13px;color:#cccccc;transform:scaleX(.9);transform-origin:0 50%">zsh</div></div><div class="tm" style="top:632.5px">"0" == false: bool(true)</div><div class="tm" style="top:649.5px">"0" === false: bool(false)</div><div class="tm" style="top:683.5px">"0" == null: bool(false)</div><div class="tm" style="top:700.5px">"0" === null: bool(false)</div><div class="tm" style="top:734.5px">"" == false: bool(true)</div><div class="tm" style="top:751.5px">"" === false: bool(false)</div><div class="tm" style="top:785.5px">"" == null: bool(true)</div><div class="tm" style="top:802.5px">"" === null: bool(false)</div><div class="tm" style="top:819.500px;font-weight:bold"><span style="color:#23d18b">shiyanlou</span><span style="color:#3b8eea">:project/</span> <span style="color:#e5e5e5">$</span> </div><div class="a" style="left:1035px;top:820.500px;width:7px;height:15px;border:1px solid #cccccc"></div><svg style="left:575px;top:842.500px" width="13" height="13"><circle cx="6.500" cy="6.500" r="5.700" fill="none" stroke="#fff" stroke-width="1.100"/><path d="M4 4L9 9M9 4L4 9" stroke="#fff" stroke-width="1.100"/></svg>
<svg style="left:603px;top:842.500px" width="13" height="13"><path d="M6.500 1.200L12.200 11.500H0.800z" fill="none" stroke="#fff" stroke-width="1.100" stroke-linejoin="round"/><path d="M6.500 5V8.500M6.500 9.500V10.500" stroke="#fff" stroke-width="1.100"/></svg><div class="t" style="left:593.00px;top:843px;font-size:13px;color:#fff;white-space:pre;transform:scaleX(0.8500);transform-origin:0 50%;">0</div><div class="t" style="left:620.00px;top:843px;font-size:13px;color:#fff;white-space:pre;transform:scaleX(0.8500);transform-origin:0 50%;">0</div><div class="t" style="left:1177.00px;top:843px;font-size:13px;color:#fff;letter-spacing:-0.50px;">行</div><div class="t" style="left:1193.50px;top:843px;font-size:13px;color:#fff;white-space:pre;transform:scaleX(0.8000);transform-origin:0 50%;">25</div><div class="t" style="left:1207.00px;top:843px;font-size:13px;color:#fff;">，</div><div class="t" style="left:1217.00px;top:843px;font-size:13px;color:#fff;letter-spacing:-0.50px;">列</div><div class="t" style="left:1234.00px;top:843px;font-size:13px;color:#fff;white-space:pre;transform:scaleX(0.8000);transform-origin:0 50%;">24</div><div class="t" style="left:1261.50px;top:843px;font-size:13px;color:#fff;letter-spacing:-0.50px;">空格</div><div class="t" style="left:1287.00px;top:843px;font-size:13px;color:#fff;white-space:pre;">:</div><div class="t" style="left:1291.50px;top:843px;font-size:13px;color:#fff;white-space:pre;transform:scaleX(0.8800);transform-origin:0 50%;">4</div><div class="t" style="left:1314.00px;top:843px;font-size:13px;color:#fff;white-space:pre;transform:scaleX(0.8420);transform-origin:0 50%;">UTF-8</div><div class="t" style="left:1362.00px;top:843px;font-size:13px;color:#fff;white-space:pre;transform:scaleX(0.9000);transform-origin:0 50%;">LF</div><div class="a" style="left:1450px;top:103px;width:145px;height:757px;background:#555555"></div><div class="t" style="left:1467.50px;top:111.5px;font-size:30px;color:#ffffff;white-space:pre;transform:scaleX(0.9250);transform-origin:0 50%;">25:39</div><div class="a" style="left:1555px;top:117px;width:50px;height:18px;border-radius:9px;background:#6c757d"></div><div class="t" style="left:1562.50px;top:120px;font-size:12px;color:#fff;">延时</div><div class="a" style="left:1470px;top:163px;width:110px;height:1px;background:#858585"></div><div class="a" style="left:1470px;top:225px;width:110px;height:1px;background:#858585"></div><div class="a" style="left:1470px;top:461px;width:110px;height:1px;background:#858585"></div><div class="a" style="left:1465px;top:179px;width:120px;height:31px;border-radius:16px;background:#ff6666"></div><div class="a" style="left:1489px;top:189px;width:12px;height:12px;background:#fff"></div><div class="t" style="left:1505.00px;top:188px;font-size:14px;color:#fff;">关闭环境</div><div class="t" style="left:1505.00px;top:255px;font-size:14px;color:#f2f2f2;">共享桌面</div><div class="t" style="left:1505.00px;top:296px;font-size:14px;color:#f2f2f2;">上传文件</div><div class="t" style="left:1505.00px;top:337px;font-size:14px;color:#f2f2f2;white-space:pre;transform:scaleX(0.9500);transform-origin:0 50%;">Web</div><div class="t" style="left:1532.50px;top:337px;font-size:14px;color:#f2f2f2;">服务</div><div class="t" style="left:1505.00px;top:378px;font-size:14px;color:#f2f2f2;">桌面全屏</div><div class="t" style="left:1505.00px;top:419px;font-size:14px;color:#f2f2f2;">环境信息</div>
<svg style="left:1488px;top:256px" width="13" height="13" viewBox="0 0 13 13"><g fill="#f2f2f2"><circle cx="10" cy="2.500" r="2.500"/><circle cx="10" cy="10.500" r="2.500"/><circle cx="2.800" cy="6.500" r="2.800"/></g><path d="M10 2.500L2.800 6.500L10 10.500" stroke="#f2f2f2" stroke-width="1.600" fill="none"/></svg>
<svg style="left:1488px;top:297px" width="13" height="12" viewBox="0 0 13 12"><path d="M6.500 0L11 5H8V8H5V5H2z" fill="#f2f2f2"/><path d="M0 8H3.500V10H9.500V8H13V12H0z" fill="#f2f2f2"/></svg>
<svg style="left:1488px;top:338px" width="13" height="13" viewBox="0 0 13 13"><circle cx="6.500" cy="6.500" r="6.300" fill="#f2f2f2"/><path d="M2.500 3.200C3.500 1.800 5.500 1.300 7 1.800 6.500 2.800 7.800 3.200 7.200 4.300 6.700 5.200 5.500 5 5.300 6 5.100 7 6.200 7.300 5.800 8.300 5 8.300 4.300 7.500 3.800 6.500 3.400 5.600 2 5 2.500 3.200z" fill="#555"/><path d="M8.500 8C9.500 7.500 10.500 8 10.800 8.800 10.300 10 9.500 10.800 8.500 11.200 8.800 10.200 7.800 9 8.500 8z" fill="#555"/></svg>
<svg style="left:1488px;top:379px" width="13" height="13" viewBox="0 0 13 13"><g fill="#f2f2f2"><path d="M0 0H5.200L3.700 1.500 6.500 4.300 9.300 1.500 7.800 0H13V5.200L11.500 3.700 8.700 6.500 11.500 9.300 13 7.800V13H7.800L9.300 11.500 6.500 8.700 3.700 11.500 5.200 13H0V7.800L1.500 9.300 4.300 6.500 1.500 3.700 0 5.200z"/></g><path d="M2 2L11 11M11 2L2 11" stroke="#f2f2f2" stroke-width="2.400"/></svg>
<svg style="left:1488px;top:419.500px" width="13" height="13" viewBox="0 0 13 13"><circle cx="6.500" cy="6.500" r="6.300" fill="#f2f2f2"/><rect x="5.600" y="2.300" width="1.900" height="1.900" fill="#555"/><path d="M4.800 5.500H7.600V9.500H8.600V10.700H4.600V9.500H5.600V6.700H4.800z" fill="#555"/></svg>
<svg style="left:1489.7px;top:491.8px" width="14" height="13" viewBox="0 0 14 13"><path d="M0.600 4L3.800 6.300L7 0.400L10.200 6.300L13.400 4L13 10.500Q13 12.600 11 12.600H3Q1 12.600 1 10.500z" fill="#ffc64a"/><path d="M6.200 5.500H7.800V7.800H9.300L7 10.300L4.700 7.800H6.200z" fill="#f3a829"/></svg><svg style="left:1488.8px;top:533px" width="14" height="13" viewBox="0 0 14 13"><path d="M0.600 4L3.800 6.300L7 0.400L10.200 6.300L13.400 4L13 10.500Q13 12.600 11 12.600H3Q1 12.600 1 10.500z" fill="#ffc64a"/><path d="M6.200 5.500H7.800V7.800H9.300L7 10.300L4.700 7.800H6.200z" fill="#f3a829"/></svg><div class="t" style="left:1507.50px;top:491px;font-size:14px;color:#f2f2f2;white-space:pre;transform:scaleX(0.8800);transform-origin:0 50%;">SSH</div><div class="t" style="left:1533.00px;top:491px;font-size:14px;color:#f2f2f2;">直连</div><div class="t" style="left:1506.00px;top:532px;font-size:14px;color:#f2f2f2;">保存环境</div><div class="t" style="left:1483.00px;top:573px;font-size:14px;color:#f78a3c;">更多会员权益</div><svg style="left:1488px;top:616px" width="14" height="10" viewBox="0 0 14 10"><rect width="14" height="10" rx="2.500" fill="#f2f2f2"/><path d="M5.500 2.800L9.300 5L5.500 7.200z" fill="#555"/></svg><div class="t" style="left:1506.00px;top:614px;font-size:14px;color:#f2f2f2;">新手指南</div>
<div class="a" style="left:0;top:860px;width:1595px;height:32px;background:linear-gradient(90deg,#235f95 0px,#2a6a9d 60px,#3376a4 240px,#3578a5 560px,#2a6298 900px,#1e4f8e 1200px,#1c4a89 1595px)"></div>
<div class="a" style="left:0;top:860px;width:1595px;height:1px;background:rgba(10,20,40,.75)"></div>
<div class="a" style="left:0;top:861px;width:1595px;height:1px;background:rgba(255,255,255,.28)"></div>
<div class="a" style="left:1058px;top:861px;width:110px;height:31px;background:linear-gradient(26deg,rgba(255,255,255,0) 38%,rgba(255,255,255,.30) 50%,rgba(255,255,255,0) 62%)"></div>
<div class="a" style="left:59.500px;top:861px;width:159px;height:33px;border:1px solid rgba(20,40,60,.7);border-radius:3px;background:radial-gradient(ellipse 90px 40px at 10px 0px,rgba(255,255,255,.55),rgba(255,255,255,0) 100%),linear-gradient(180deg,rgba(255,255,255,.34),rgba(255,255,255,.18) 50%,rgba(255,255,255,.10) 51%,rgba(255,255,255,.16));box-shadow:inset 0 0 0 1px rgba(255,255,255,.4)"></div>
<div class="a" style="left:283.500px;top:861px;width:158px;height:33px;border:1px solid rgba(20,40,60,.7);border-radius:3px;background:radial-gradient(ellipse 90px 40px at 10px 0px,rgba(255,255,255,.5),rgba(255,255,255,0) 100%),linear-gradient(180deg,rgba(255,255,255,.30),rgba(255,255,255,.14) 50%,rgba(255,255,255,.06) 51%,rgba(255,255,255,.12));box-shadow:inset 0 0 0 1px rgba(255,255,255,.36)"></div>
<div class="a" style="left:0;top:861px;width:60px;height:31px;overflow:hidden"><div class="a" style="left:8.500px;top:1.500px;width:37px;height:37px;border-radius:50%;background:radial-gradient(circle at 50% 30%,#8fc3e0 0%,#4a8fbd 40%,#22639a 75%,#1a4e80 100%);box-shadow:0 0 0 1.200px rgba(15,45,80,.8),0 0 0 2.400px rgba(140,190,225,.55)"></div></div>
<svg style="left:15px;top:868px" width="25" height="24" viewBox="0 0 25 24"><path d="M2 5.500C5 3 8 3 11 5L9 12.500C6.500 10.500 3.500 10.500 0.500 12.500z" fill="#f25a1d"/><path d="M12.500 5.500C15.500 8 19 8 22 5.500L20 13C17 15.500 13.500 15.500 10.500 13z" fill="#7cba2b"/><path d="M0 14.500C3 12 6 12 8.500 14L6.500 21.500C4 19.500 1 19.500-2 21.500z" fill="#2f9be3"/><path d="M10 15C13 17.500 16.500 17.500 19.500 15L17.500 22.500C14.500 25 11 25 8 22.500z" fill="#fbc314"/></svg><svg style="left:69.200px;top:863.200px" width="31.600" height="31.600" viewBox="0 0 32 32"><circle cx="16" cy="16" r="16" fill="#e53b2f"/><path d="M30.130 8.500A16 16 0 0 1 15.430 31.990L22.500 19.750L16 8.500z" fill="#fcc21f"/><path d="M15.430 31.990A16 16 0 0 1 2.440 7.510L9.500 19.750L22.500 19.750z" fill="#2ea350"/><circle cx="16" cy="16" r="7.600" fill="#fff"/><circle cx="16" cy="16" r="6" fill="#3f7fe8"/></svg><div class="t" style="left:104.50px;top:873px;font-size:13px;color:#fff;white-space:pre;transform:scaleX(1.0400);transform-origin:0 50%;">Introduction to ...</div><svg style="left:236px;top:865px" width="30" height="30" viewBox="0 0 30 30"><circle cx="15" cy="15" r="15" fill="#fff"/><circle cx="15" cy="15" r="12.800" fill="#4490ea"/><path d="M11 3.500C2.500 10 11 13.500 16 15.500S24.500 20.500 19.500 27.500" fill="none" stroke="#fff" stroke-width="5.400"/></svg><svg style="left:294px;top:867px" width="32" height="27" viewBox="0 0 32 27"><defs><linearGradient id="og" x1="0" y1="0" x2="0" y2="1"><stop offset="0" stop-color="#f7a825"/><stop offset="1" stop-color="#e8501a"/></linearGradient></defs><circle cx="9.500" cy="11" r="6" fill="#f7d9b5"/><path d="M3.500 10C3.500 5 7 3.500 10 3.500 13.500 3.500 16 6 15.500 10 13 9.500 10 8.500 8.500 6 7.500 8 5.500 9.500 3.500 10z" fill="#2b1a12"/><path d="M0 27C0 20 4 17.500 9.500 17.500S19 20 19 27z" fill="url(#og)"/><circle cx="21.500" cy="9" r="6.800" fill="#fbe3c3"/><path d="M14.500 8C14.500 2.500 18.500 0.500 22 0.500 26 0.500 29 3.500 28.500 8 25.500 7.500 22 6 20.500 3.500 19.500 5.500 17 7.500 14.500 8z" fill="#24150e"/><path d="M10.500 27C10.500 19.500 15 16.500 21.500 16.500S32 19.500 32 27z" fill="url(#og)"/><path d="M18.500 17L21.500 23 24.500 17z" fill="#fff"/></svg><div class="t" style="left:329.00px;top:873.5px;font-size:12px;color:#fff;letter-spacing:0.20px;">学生端主面板</div>
<div class="a" style="left:1311px;top:871px;width:16px;height:14px;background:#f2531c;border-radius:3px;transform:rotate(-8deg)"></div>
<svg style="left:1313px;top:872.500px" width="12.500" height="11.500" viewBox="0 0 22 20"><path d="M19.500 3.500C15 0.500 3.500 1 3.500 6C3.500 10.500 18.500 8.500 18.500 13.500C18.500 18.500 6 19 1.500 15.500" fill="none" stroke="#fff" stroke-width="4.400" transform="rotate(-9 11 10)"/></svg>
<svg style="left:1342px;top:872px" width="17" height="17" viewBox="0 0 17 17"><circle cx="8.500" cy="8.500" r="8" fill="#d8d5cb" stroke="#8a8a80" stroke-width="1"/><circle cx="8.500" cy="9" r="5.200" fill="#f4f2ea"/><path d="M3 5.500C4.500 2.500 12.500 2.500 14 5.500" fill="none" stroke="#7aa84a" stroke-width="1.600"/><circle cx="6.500" cy="8.500" r=".9" fill="#444"/><circle cx="10.500" cy="8.500" r=".9" fill="#444"/><path d="M6 11.500C7.500 12.800 9.500 12.800 11 11.500" fill="none" stroke="#666" stroke-width=".8"/></svg>
<svg style="left:1366px;top:872px" width="18" height="17" viewBox="0 0 18 17"><circle cx="5" cy="5.500" r="3.300" fill="#f1d2ae"/><path d="M1.500 5C1.500 2 3.500 1.500 5 1.500S8.500 2.500 8.500 5C7 5 5.500 4 5 3 4.500 4 3 5 1.500 5z" fill="#2a1a10"/><path d="M0 14C0 10.500 2 9 5 9s5 1.500 5 5z" fill="#ee8a1e"/><circle cx="11" cy="5" r="3.600" fill="#f8dfbf"/><path d="M7.300 4.500C7.300 1.500 9.500 0.500 11 0.500s4 1 3.700 4C13 4.500 11.500 3.500 11 2.500 10.500 3.500 9 4.500 7.300 4.500z" fill="#23150d"/><path d="M5.500 14C5.500 10 8 8.800 11 8.800s5.500 1.200 5.500 5.200z" fill="#f49a24"/><circle cx="13.500" cy="12.500" r="4" fill="#e0202a"/><path d="M11.800 10.800L15.200 14.200M15.200 10.800L11.800 14.200" stroke="#fff" stroke-width="1.400"/></svg>
<svg style="left:1390px;top:872px" width="17" height="17" viewBox="0 0 17 17"><rect x="0.500" y="0.500" width="16" height="16" rx="1.500" fill="#2a86d8" stroke="#9fd0f5" stroke-width="1"/><rect x="4.500" y="3" width="9" height="6" fill="none" stroke="#fff" stroke-width="1"/><path d="M7 4.500L11 7.500M11 4.500L7 7.500" stroke="#fff" stroke-width=".9"/><path d="M6 11.500H13M8 10L6 11.500 8 13M6 14.500H13" stroke="#fff" stroke-width="1" fill="none"/><path d="M0.500 12L5 16.500H0.500z" fill="#e7b526"/></svg>
<svg style="left:1415px;top:873px" width="15" height="15" viewBox="0 0 15 15"><g fill="none" stroke="#fff" stroke-width="1.500"><path d="M3.500 3.500V1H14V11.500H11.500"/><rect x="1" y="3.800" width="10.200" height="10.200"/></g></svg>
<svg style="left:1439px;top:871px" width="17" height="18" viewBox="0 0 17 18"><path d="M7.500 1.500C5.500 3 3 3.500 0.500 3.500 0.500 10 2.500 14.500 7.500 17.500 12.500 14.500 14.500 10 14.500 3.500 12 3.500 9.500 3 7.500 1.500z" fill="#f4a81e"/><path d="M7.500 1.500C5.500 3 3 3.500 0.500 3.500 0.500 10 2.500 14.500 7.500 17.500z" fill="#f8c23e"/><path d="M8.500 5.500C6 8 5 10 5.500 12c.4 1.500 1.600 2.300 2.500 2.300 1.500 0 2.600-1.200 2.500-2.800C10.500 10 8.500 8.500 8.500 5.500z" fill="#fff"/><circle cx="13.500" cy="3" r="2.500" fill="#f0622a"/></svg>
<svg style="left:1462px;top:872px" width="17" height="17" viewBox="0 0 17 17"><path d="M0.500 5.500H3.500L8 1.500V14.500L3.500 10.500H0.500z" fill="#f3f3f3" stroke="#9a9a9a" stroke-width=".6"/><circle cx="11.500" cy="12" r="4.200" fill="#e0202a"/><path d="M9.700 10.200L13.300 13.800M13.300 10.200L9.700 13.800" stroke="#fff" stroke-width="1.500"/></svg>
<svg style="left:1486px;top:872px" width="18" height="17" viewBox="0 0 18 17"><g fill="none" stroke="#fff" stroke-width="1.300"><rect x="5.500" y="3.500" width="11" height="8.500"/><path d="M8 15.500H14M11 12V15.500"/></g><path d="M1.500 0.500V3M4.500 0.500V3" stroke="#fff" stroke-width="1.200"/><path d="M0.500 3H5.500V6.500L4 8H2L0.500 6.500z" fill="#fff"/><path d="M3 8V13.500H6" fill="none" stroke="#fff" stroke-width="1.200"/></svg>
<div class="t" style="left:1532.50px;top:864.5px;font-size:13px;color:#fff;white-space:pre;transform:scaleX(0.9700);transform-origin:0 50%;">10:08</div><div class="t" style="left:1519.00px;top:882px;font-size:13px;color:#fff;white-space:pre;transform:scaleX(0.9700);transform-origin:0 50%;">2023/3/14</div><div class="a" style="left:1585px;top:861px;width:12px;height:33px;border:1px solid rgba(255,255,255,.4);background:linear-gradient(90deg,rgba(255,255,255,.18),rgba(255,255,255,.05));box-shadow:-1px 0 0 rgba(0,0,0,.5)"></div>
<div class="a" style="left:1400px;top:834px;width:195px;height:26px;background:#fff;box-shadow:0 0 1px rgba(0,0,0,.3)"></div>
<div class="a" style="left:1376px;top:831px;width:29px;height:27px;background:#f2531c;border-radius:6px;transform:rotate(-9deg)"></div>
<svg style="left:1380px;top:835px" width="22" height="20" viewBox="0 0 22 20"><path d="M19.500 3.500C15 0.500 3.500 1 3.500 6C3.500 10.500 18.500 8.500 18.500 13.500C18.500 18.500 6 19 1.500 15.500" fill="none" stroke="#fff" stroke-width="4" stroke-linecap="butt" transform="rotate(-9 11 10)"/></svg>
<svg style="left:1412.500px;top:840px" width="13.500" height="14.500" viewBox="0 0 15 17"><g fill="none" stroke="#1a6fe6" stroke-width="2.300"><rect x="1.200" y="4" width="12.600" height="6.500"/><path d="M7.500 0V17"/></g></svg>
<div class="a" style="left:1438px;top:842px;width:5px;height:5px;border-radius:50%;border:1.500px solid #1a6fe6"></div>
<svg style="left:1445px;top:848px" width="6" height="9" viewBox="0 0 6 9"><path d="M1 1.500a2 2 0 1 1 3.800 1C4.500 5 3.500 7 1.500 8.500 2.500 6.500 3 5.500 3 4.500 2 4.500 1 3.500 1 1.500z" fill="#1a6fe6"/></svg>
<svg style="left:1460px;top:840px" width="15" height="15" viewBox="0 0 15 15"><circle cx="7.500" cy="7.500" r="7.500" fill="#1a6fe6"/><circle cx="5" cy="5.500" r="1.300" fill="#fff"/><circle cx="10" cy="5.500" r="1.300" fill="#fff"/><path d="M3.500 8.500H11.500C11 11.500 9.500 12.500 7.500 12.500S4 11.500 3.500 8.500z" fill="#fff"/></svg>
<svg style="left:1485.500px;top:839px" width="11" height="15.500" viewBox="0 0 12 17"><rect x="3.200" y="0" width="5.600" height="10" rx="2.800" fill="#1a6fe6"/><path d="M1 7c0 3 2 5 5 5s5-2 5-5" fill="none" stroke="#1a6fe6" stroke-width="1.600"/><path d="M6 12V15.500M3 16H9" stroke="#1a6fe6" stroke-width="1.600"/></svg>
<svg style="left:1507px;top:841px" width="16" height="12" viewBox="0 0 16 12"><rect width="16" height="12" rx="1.500" fill="#1a6fe6"/><g fill="#fff"><rect x="2" y="2" width="1.800" height="1.800"/><rect x="4.700" y="2" width="1.800" height="1.800"/><rect x="7.400" y="2" width="1.800" height="1.800"/><rect x="10.100" y="2" width="1.800" height="1.800"/><rect x="12.500" y="2" width="1.500" height="1.800"/><rect x="2" y="5" width="1.800" height="1.800"/><rect x="4.700" y="5" width="1.800" height="1.800"/><rect x="7.400" y="5" width="1.800" height="1.800"/><rect x="10.100" y="5" width="1.800" height="1.800"/><rect x="12.500" y="5" width="1.500" height="1.800"/><rect x="3.500" y="8.300" width="9" height="1.700"/></g></svg>
<svg style="left:1532px;top:839px" width="14" height="16" viewBox="0 0 14 16"><circle cx="6.500" cy="4.500" r="4" fill="#c8c8c8"/><path d="M0 16C0 11 3 9.500 6.500 9.500S13 11 13 16z" fill="#c8c8c8"/><rect x="9" y="11" width="5" height="4" fill="#e6e6e6" stroke="#b5b5b5" stroke-width=".6"/></svg>
<svg style="left:1555px;top:840px" width="17" height="15" viewBox="0 0 17 15"><path d="M5 0C6 1.500 11 1.500 12 0L17 2.500 15.500 6.500 13.500 5.800V15H3.500V5.800L1.500 6.500 0 2.500z" fill="#1a6fe6"/></svg>
<svg style="left:1580px;top:840px" width="15" height="15" viewBox="0 0 15 15"><g fill="#1a6fe6"><rect x="0" y="0" width="6.500" height="6.500" rx="1.800"/><rect x="8.500" y="0" width="6.500" height="6.500" rx="1.800"/><rect x="0" y="8.500" width="6.500" height="6.500" rx="1.800"/><rect x="8.500" y="8.500" width="6.500" height="6.500" rx="1.800"/></g></svg>
</body></html>
